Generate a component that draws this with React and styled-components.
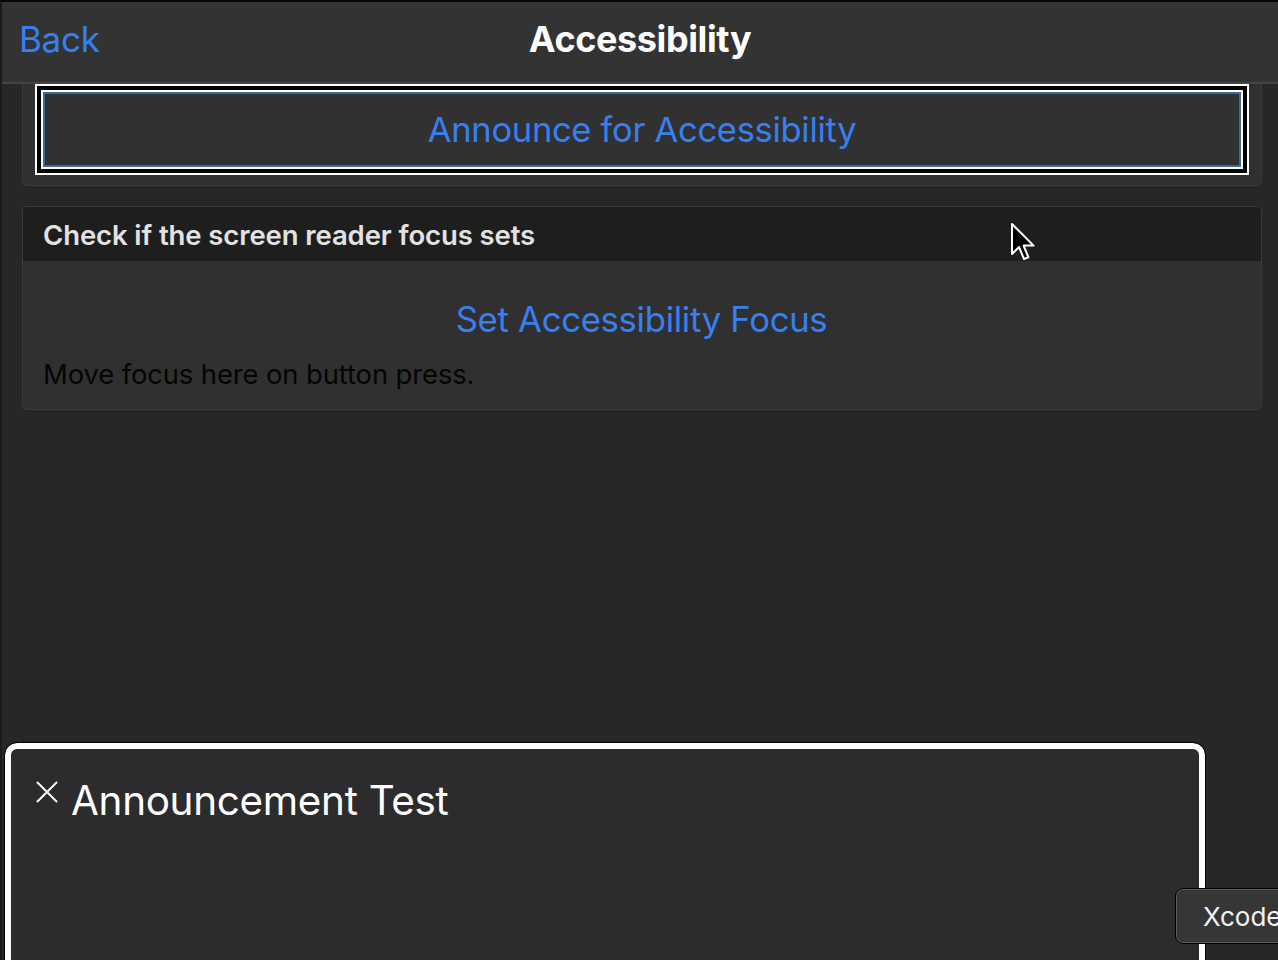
import React from "react";
import styled, { createGlobalStyle } from "styled-components";

const Global = createGlobalStyle`
  html, body { margin: 0; padding: 0; background: #262626; }
  body { font-family: Inter, "Noto Sans", "Liberation Sans", sans-serif; }
  * { box-sizing: border-box; }
`;

const Page = styled.div`
  position: relative;
  width: 1278px;
  height: 960px;
  overflow: hidden;
  background: #272727;
  border-top: 2px solid #050505;
  border-left: 2px solid #171b24;
  display: flex;
  flex-direction: column;
`;

const Header = styled.header`
  height: 82px;
  flex: none;
  background: #333333;
  border-bottom: 2px solid #444444;
  display: grid;
  grid-template-columns: 1fr auto 1fr;
  align-items: center;
  padding: 0 17px 6px 17px;
  position: relative;
  z-index: 2;
`;

const BackLink = styled.span`
  color: #3680f2;
  font-size: 35px;
  letter-spacing: -0.3px;
  justify-self: start;
`;

const Title = styled.h1`
  margin: 0;
  color: #ffffff;
  font-size: 36px;
  font-weight: 700;
  letter-spacing: -0.4px;
`;

const Content = styled.main`
  flex: 1;
  overflow: hidden;
  display: flex;
  flex-direction: column;
  gap: 20px;
  padding: 0 16px 0 20px;
`;

const Card = styled.section`
  background: #303030;
  border: 1px solid #3b3b3b;
  border-radius: 5px;
  overflow: ${(p) => (p.$clip ? "hidden" : "visible")};
  margin-top: ${(p) => p.$offset || 0}px;
  padding: ${(p) => p.$pad || "0"};
`;

const FocusButton = styled.button`
  display: flex;
  align-items: center;
  justify-content: center;
  width: 100%;
  height: 75px;
  background: #313131;
  border: 2px solid #3d6a9c;
  color: #3680f2;
  font-family: inherit;
  font-size: 34.5px;
  letter-spacing: -0.3px;
  box-shadow: 0 0 0 2px #ffffff, 0 0 0 6px #000000, 0 0 0 8px #ffffff;
  padding: 0;
`;

const CardHeader = styled.div`
  height: 54px;
  background: #1e1e1e;
  display: flex;
  align-items: center;
  padding: 2px 0 0 20px;
  color: #e2e2e2;
  font-size: 27.5px;
  font-weight: 600;
  letter-spacing: -0.1px;
`;

const CardBody = styled.div`
  padding: 38px 21px 20px 20px;
  display: flex;
  flex-direction: column;
  gap: 20px;
`;

const LinkButton = styled.div`
  color: #3680f2;
  font-size: 34.7px;
  line-height: 40px;
  text-align: center;
  letter-spacing: -0.3px;
`;

const Note = styled.div`
  color: #050505;
  font-size: 27.4px;
  line-height: 30px;
  letter-spacing: -0.1px;
`;

const Announcement = styled.div`
  position: absolute;
  left: 3px;
  top: 741px;
  width: 1200px;
  height: 240px;
  background: #2c2c2e;
  border: 6px solid #ffffff;
  border-radius: 12px;
  outline: 1px solid #000;
  display: flex;
  align-items: flex-start;
  gap: 12px;
  padding: 28px 0 0 24px;
  z-index: 3;
`;

const CloseIcon = styled.svg`
  width: 24px;
  height: 24px;
  margin-top: 3px;
  flex: none;
`;

const AnnouncementText = styled.div`
  color: #ffffff;
  font-size: 40.4px;
  line-height: 48px;
  letter-spacing: -0.3px;
`;

const Tooltip = styled.div`
  position: absolute;
  left: 1173px;
  top: 886px;
  width: 140px;
  height: 56px;
  background: #363636;
  border: 1px solid #000;
  box-shadow: inset 0 0 0 1px #5a5a5a;
  border-radius: 8px;
  display: flex;
  align-items: center;
  padding-left: 27px;
  color: #f2f2f2;
  font-size: 26px;
  white-space: nowrap;
  z-index: 4;
`;

const Cursor = styled.svg`
  position: absolute;
  left: 1008px;
  top: 220px;
  width: 26px;
  height: 40px;
  z-index: 5;
`;

export default function App() {
  return (
    <>
      <Global />
      <Page>
        <Header>
          <BackLink>Back</BackLink>
          <Title>Accessibility</Title>
          <span />
        </Header>
        <Content>
          <Card $offset={-13} $pad="20px 20px 18px">
            <FocusButton>Announce for Accessibility</FocusButton>
          </Card>
          <Card $clip>
            <CardHeader>Check if the screen reader focus sets</CardHeader>
            <CardBody>
              <LinkButton>Set Accessibility Focus</LinkButton>
              <Note>Move focus here on button press.</Note>
            </CardBody>
          </Card>
        </Content>
        <Announcement>
          <CloseIcon viewBox="0 0 24 24">
            <path d="M2 2 L22 22 M22 2 L2 22" stroke="#fff" strokeWidth="2" fill="none" />
          </CloseIcon>
          <AnnouncementText>Announcement Test</AnnouncementText>
        </Announcement>
        <Tooltip>Xcode</Tooltip>
        <Cursor viewBox="0 0 13 20">
          <path
            d="M1 1 L1 16 L4.5 12.5 L7 18.5 L9.2 17.6 L6.8 11.8 L11.8 11.8 Z"
            fill="#000"
            stroke="#fff"
            strokeWidth="1"
            strokeLinejoin="round"
          />
        </Cursor>
      </Page>
    </>
  );
}
